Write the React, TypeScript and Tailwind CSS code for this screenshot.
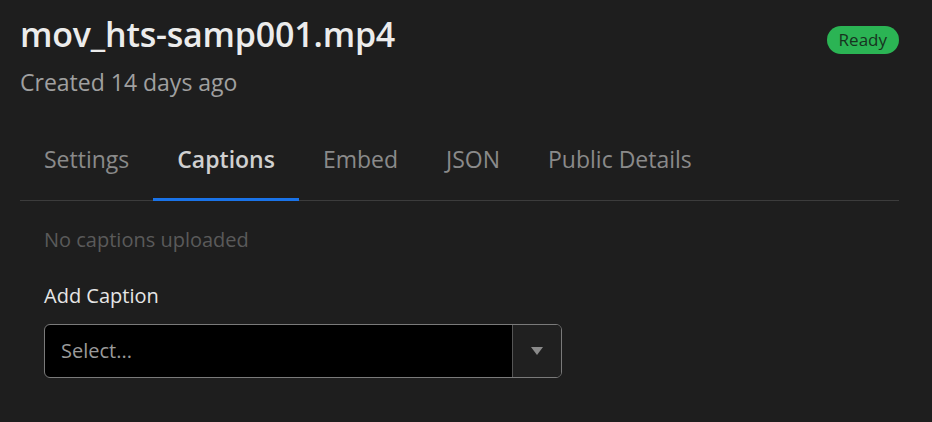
import React, { useState } from "react";

const tabs = ["Settings", "Captions", "Embed", "JSON", "Public Details"];

export default function App() {
  const [active, setActive] = useState("Captions");

  return (
    <div
      className="min-h-[422px] bg-[#1e1e1e] pr-[33px] pl-5 pt-[14px]"
      style={{ fontFamily: '"Open Sans", "Noto Sans", sans-serif' }}
    >
      <div className="flex items-start justify-between">
        <div>
          <h1 className="text-[34px] leading-[40px] font-semibold tracking-[-0.2px] text-[#ececec]">
            mov_hts-samp001.mp4
          </h1>
          <p className="mt-[14px] text-[23px] leading-[28px] text-[#a0a0a0]">
            Created 14 days ago
          </p>
        </div>
        <span className="mt-[12px] rounded-full bg-[#2bb454] px-3 text-[17px] leading-[28px] text-[#17331f]">
          Ready
        </span>
      </div>

      <div className="mt-[40px] flex border-b border-[#3c3c3c]">
        {tabs.map((t) => (
          <button
            key={t}
            onClick={() => setActive(t)}
            className={
              t === active
                ? "-mb-px border-b-[3px] border-[#1a73e8] px-6 pt-[8px] pb-[24px] text-[23px] leading-[30px] font-semibold text-[#d0d0d0]"
                : "-mb-px border-b-[3px] border-transparent px-6 pt-[8px] pb-[24px] text-[23px] leading-[30px] text-[#8a8a8a]"
            }
          >
            {t}
          </button>
        ))}
      </div>

      <div className="px-6">
        <p className="mt-[26px] text-[20px] leading-[26px] text-[#5a5a5a]">
          No captions uploaded
        </p>
        <p className="mt-[30px] text-[20px] leading-[26px] text-[#e6e6e6]">
          Add Caption
        </p>
        <div className="mt-[15px] flex h-[54px] w-[518px] overflow-hidden rounded-[6px] border border-[#7a7a7a] bg-black">
          <div className="flex flex-1 items-center pl-4 text-[20px] text-[#9a9a9a]">
            Select...
          </div>
          <div className="flex w-[49px] items-center justify-center border-l border-[#555] bg-[#202020]">
            <svg width="12" height="8" viewBox="0 0 12 8">
              <path d="M0 0 L12 0 L6 8 Z" fill="#8a8a8a" />
            </svg>
          </div>
        </div>
      </div>
    </div>
  );
}
